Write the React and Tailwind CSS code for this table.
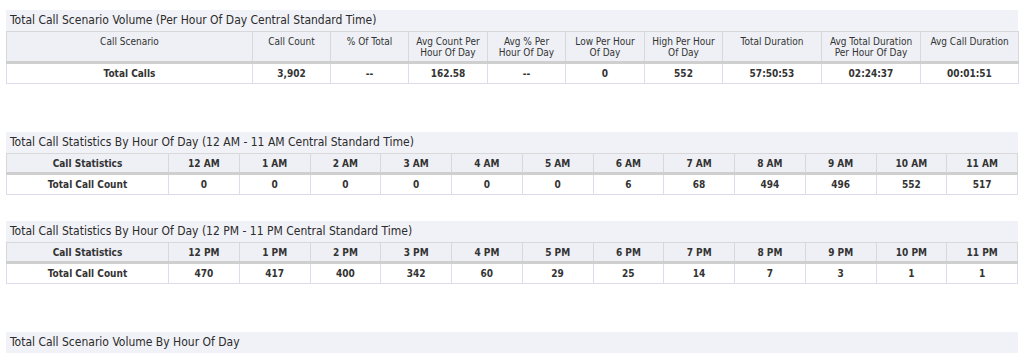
import React from "react";

const scenarioCols = [
  { label: "Call Scenario", w: "w-[246px]" },
  { label: "Call Count", w: "w-[78px]" },
  { label: "% Of Total", w: "w-[78px]" },
  { label: "Avg Count Per Hour Of Day", w: "w-[79px]" },
  { label: "Avg % Per Hour Of Day", w: "w-[78px]" },
  { label: "Low Per Hour Of Day", w: "w-[79px]" },
  { label: "High Per Hour Of Day", w: "w-[78px]" },
  { label: "Total Duration", w: "w-[99px]" },
  { label: "Avg Total Duration Per Hour Of Day", w: "w-[99px]" },
  { label: "Avg Call Duration", w: "w-[98px]" },
];

const scenarioRow = ["Total Calls", "3,902", "--", "162.58", "--", "0", "552", "57:50:53", "02:24:37", "00:01:51"];

const amHours = ["12 AM", "1 AM", "2 AM", "3 AM", "4 AM", "5 AM", "6 AM", "7 AM", "8 AM", "9 AM", "10 AM", "11 AM"];
const amCounts = [0, 0, 0, 0, 0, 0, 6, 68, 494, 496, 552, 517];
const pmHours = ["12 PM", "1 PM", "2 PM", "3 PM", "4 PM", "5 PM", "6 PM", "7 PM", "8 PM", "9 PM", "10 PM", "11 PM"];
const pmCounts = [470, 417, 400, 342, 60, 29, 25, 14, 7, 3, 1, 1];

function Title({ children }) {
  return (
    <div className="h-[21px] bg-[#f1f2f7] pl-[4px] text-[12px] leading-[21px] text-[#2b2b2b]">
      {children}
    </div>
  );
}

function Th({ children, bold }) {
  return (
    <th
      className={`border border-[#d8d8d8] border-b-[3px] border-b-[#cfcfcf] bg-[#eef0f5] px-[6px] pt-[4px] pb-[3px] align-top text-center text-[10px] leading-[11px] text-[#333] ${
        bold ? "font-bold" : "font-normal"
      }`}
    >
      {children}
    </th>
  );
}

function Td({ children }) {
  return (
    <td className="border border-[#dcdcee] px-[2px] h-[21px] text-center text-[10px] font-bold text-[#333]">
      {children}
    </td>
  );
}

function HourTable({ title, hours, counts }) {
  return (
    <div>
      <Title>{title}</Title>
      <table className="w-full table-fixed border-collapse">
        <colgroup>
          <col className="w-[162px]" />
          {hours.map((h) => (
            <col key={h} />
          ))}
        </colgroup>
        <thead>
          <tr>
            <Th bold>Call Statistics</Th>
            {hours.map((h) => (
              <Th bold key={h}>
                {h}
              </Th>
            ))}
          </tr>
        </thead>
        <tbody>
          <tr>
            <Td>Total Call Count</Td>
            {counts.map((c, i) => (
              <Td key={i}>{c}</Td>
            ))}
          </tr>
        </tbody>
      </table>
    </div>
  );
}

export default function App() {
  return (
    <div className="w-[1024px] h-[357px] overflow-hidden bg-white px-[6px] pt-[10px] font-['DejaVu_Sans_Condensed','DejaVu_Sans',sans-serif]">
      <div className="w-[1012px]">
        <Title>Total Call Scenario Volume (Per Hour Of Day Central Standard Time)</Title>
        <table className="w-full table-fixed border-collapse">
          <colgroup>
            {scenarioCols.map((c) => (
              <col key={c.label} className={c.w} />
            ))}
          </colgroup>
          <thead>
            <tr>
              {scenarioCols.map((c) => (
                <Th key={c.label}>{c.label}</Th>
              ))}
            </tr>
          </thead>
          <tbody>
            <tr>
              {scenarioRow.map((v, i) => (
                <Td key={i}>{v}</Td>
              ))}
            </tr>
          </tbody>
        </table>

        <div className="mt-[48px]">
          <HourTable title="Total Call Statistics By Hour Of Day (12 AM - 11 AM Central Standard Time)" hours={amHours} counts={amCounts} />
        </div>
        <div className="mt-[26px]">
          <HourTable title="Total Call Statistics By Hour Of Day (12 PM - 11 PM Central Standard Time)" hours={pmHours} counts={pmCounts} />
        </div>

        <div className="mt-[48px]">
          <Title>Total Call Scenario Volume By Hour Of Day</Title>
        </div>
      </div>
    </div>
  );
}
